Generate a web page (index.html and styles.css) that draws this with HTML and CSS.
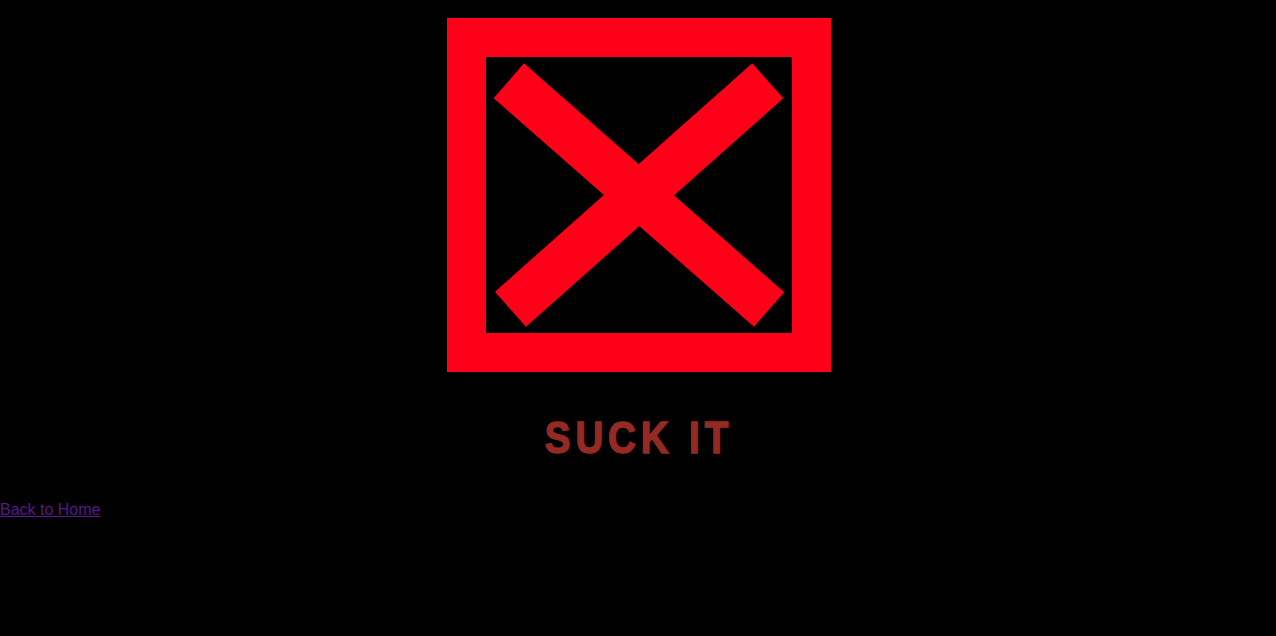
FILE: index.html
```html
<!DOCTYPE html>
<html>
<head>
<meta charset="utf-8">
<title>Denied</title>
<link rel="stylesheet" href="styles.css">
</head>
<body>
<main class="page">
  <div class="hero">
    <svg class="denied" width="384" height="354" viewBox="0 0 384 354" aria-hidden="true">
      <rect x="0" y="0" width="384" height="354" fill="#ff0019"/>
      <rect x="39" y="39" width="306" height="276" fill="#000"/>
      <polygon points="77,45.3 46.7,80.3 307,308.7 337.3,274.3" fill="#ff0019"/>
      <polygon points="305.3,45.3 336.3,80.3 79,308.7 48,273.7" fill="#ff0019"/>
    </svg>
    <h1 class="title"><span class="title-text">SUCK IT</span></h1>
  </div>
  <p class="back"><a href="#">Back to Home</a></p>
</main>
</body>
</html>
```

FILE: styles.css
```css
html, body {
  margin: 0;
  padding: 0;
  background: #000;
}
body {
  font-family: "Liberation Sans", Arial, sans-serif;
  min-height: 636px;
}
.page {
  padding-top: 18px;
}
.hero {
  display: flex;
  flex-direction: column;
  align-items: center;
}
.denied {
  display: block;
  margin-left: 1px;
}
.title {
  margin: 43px 0 0 0;
  font-family: "Liberation Sans", Arial, sans-serif;
  font-size: 45px;
  line-height: 46px;
  font-weight: 700;
  color: #952a23;
}
.title-text {
  display: inline-block;
  letter-spacing: 5.7px;
  margin-right: -2px;
  transform: scaleX(0.856);
  -webkit-text-stroke: 1.5px #952a23;
}
.back {
  margin: 40px 0 0 0;
  font-size: 16px;
}
.back a {
  color: #551a8b;
}
```
